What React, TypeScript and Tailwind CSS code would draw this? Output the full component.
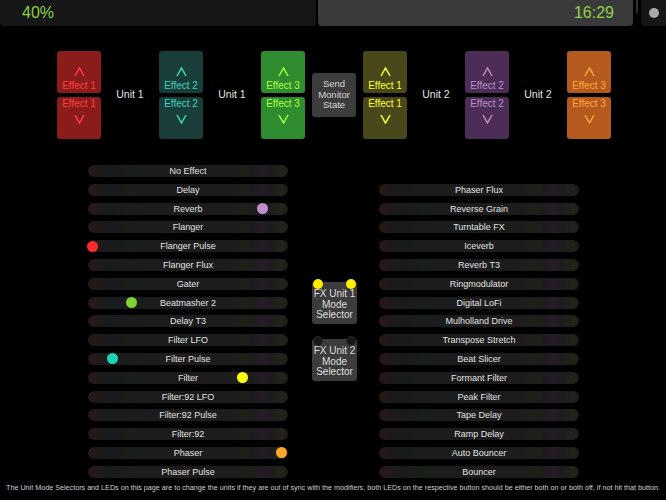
const leftItems: { name: string; led?: string }[] = [
  { name: "No Effect" },
  { name: "Delay" },
  { name: "Reverb", led: "left-[169px] bg-[#c08ec8]" },
  { name: "Flanger" },
  { name: "Flanger Pulse", led: "left-[-1px] bg-[#ff2a2a]" },
  { name: "Flanger Flux" },
  { name: "Gater" },
  { name: "Beatmasher 2", led: "left-[38px] bg-[#7fd335]" },
  { name: "Delay T3" },
  { name: "Filter LFO" },
  { name: "Filter Pulse", led: "left-[19px] bg-[#1fd3b4]" },
  { name: "Filter", led: "left-[149px] bg-[#ffff10]" },
  { name: "Filter:92 LFO" },
  { name: "Filter:92 Pulse" },
  { name: "Filter:92" },
  { name: "Phaser", led: "left-[188px] bg-[#ffa82a]" },
  { name: "Phaser Pulse" },
];

const rightItems = [
  "Phaser Flux",
  "Reverse Grain",
  "Turntable FX",
  "Iceverb",
  "Reverb T3",
  "Ringmodulator",
  "Digital LoFi",
  "Mulholland Drive",
  "Transpose Stretch",
  "Beat Slicer",
  "Formant Filter",
  "Peak Filter",
  "Tape Delay",
  "Ramp Delay",
  "Auto Bouncer",
  "Bouncer",
];

const effects = [
  { label: "Effect 1", bg: "bg-[#8a1c1c]", fg: "text-[#ff3c3c]" },
  { label: "Effect 2", bg: "bg-[#193d39]", fg: "text-[#3fd4bf]" },
  { label: "Effect 3", bg: "bg-[#2f8c2f]", fg: "text-[#a6ff42]" },
  { label: "Effect 1", bg: "bg-[#48481a]", fg: "text-[#ffff33]" },
  { label: "Effect 2", bg: "bg-[#4b2d55]", fg: "text-[#b890cc]" },
  { label: "Effect 3", bg: "bg-[#b45a1e]", fg: "text-[#ffa83c]" },
];

const gaps = ["Unit 1", "Unit 1", "send", "Unit 2", "Unit 2"];

function Chevron({ up }: { up?: boolean }) {
  return (
    <svg width="11" height="10" viewBox="0 0 11 10" className="block">
      <polyline
        points={up ? "1,9 5.5,1 10,9" : "1,1 5.5,9 10,1"}
        fill="none"
        stroke="currentColor"
        strokeWidth="1.5"
      />
    </svg>
  );
}

function EffectColumn({ label, bg, fg }: { label: string; bg: string; fg: string }) {
  return (
    <div className={`flex w-[44px] flex-col gap-[4px] ${fg}`}>
      <div className={`flex h-[42px] flex-col items-center justify-end rounded-[3px] pb-[1px] ${bg}`}>
        <Chevron up />
        <span className="mt-[3px] text-[10px] leading-[12px]">{label}</span>
      </div>
      <div className={`flex h-[42px] flex-col items-center rounded-[3px] pt-[1px] ${bg}`}>
        <span className="text-[10px] leading-[12px]">{label}</span>
        <span className="mt-[4px]">
          <Chevron />
        </span>
      </div>
    </div>
  );
}

const rowBg =
  "bg-[linear-gradient(90deg,#2a1717_0%,#1d1a1a_7%,#181c1e_12%,#1b1b1b_17%,#1a1f1a_22%,#1c1c1c_28%,#1c1c1c_72%,#1f1f18_78%,#1c1c1c_82%,#261a28_87%,#1c1c1c_92%,#23231a_97%,#1c1c1c_100%)]";

function Row({ name, led }: { name: string; led?: string }) {
  return (
    <div className={`relative flex h-[12px] w-[200px] items-center justify-center rounded-full ${rowBg}`}>
      <span className="text-[9px] leading-[12px] text-[#e2e2e2]">{name}</span>
      {led && <span className={`absolute top-[0.5px] h-[11px] w-[11px] rounded-full ${led}`} />}
    </div>
  );
}

function ModeSelector({ n, on }: { n: number; on: boolean }) {
  const ledCls = on
    ? "bg-[#ffee00]"
    : "bg-[#161616] border border-[#2a2a2a]";
  return (
    <div className="relative flex h-[42px] w-[45px] flex-col items-center justify-center rounded-[3px] bg-[#3c3c3c] pt-[4px] text-center text-[10px] leading-[10.5px] text-[#dedede]">
      <span className={`absolute left-[1px] top-[-3px] h-[10px] w-[10px] rounded-full ${ledCls}`} />
      <span className={`absolute right-[1px] top-[-3px] h-[10px] w-[10px] rounded-full ${ledCls}`} />
      <span>FX Unit {n}</span>
      <span>Mode</span>
      <span>Selector</span>
    </div>
  );
}

export default function App() {
  return (
    <main
      className="h-[500px] w-[666px] overflow-hidden bg-black"
      style={{ fontFamily: '"Liberation Sans", Arial, sans-serif' }}
    >
      {/* Status bar */}
      <header className="flex h-[26px]">
        <div className="flex w-[316px] items-center rounded-b-[4px] bg-[#161616] pl-[22px] text-[16px] text-[#8ed14b]">
          40%
        </div>
        <div className="ml-[2px] flex w-[315px] items-center justify-end rounded-b-[4px] bg-[#3a3a3a] pr-[19px] text-[16px] text-[#8ed14b]">
          16:29
        </div>
        <div className="ml-[3px] h-[13px] w-[2px] bg-[#333]" />
        <div className="ml-[3px] flex flex-1 items-center justify-center rounded-bl-[4px] bg-[#161616]">
          <span className="h-[10px] w-[10px] rounded-full bg-[#a9a9a9]" />
        </div>
      </header>

      {/* Effect selectors */}
      <section className="mt-[25px] flex pl-[57px]">
        {effects.map((e, i) => (
          <div key={i} className="flex">
            <EffectColumn {...e} />
            {i < gaps.length && (
              <div className="flex w-[58px] items-center justify-center">
                {gaps[i] === "send" ? (
                  <div className="flex h-[44px] w-[44px] flex-col items-center justify-center rounded-[3px] bg-[#3c3c3c] text-center text-[9.5px] leading-[10.5px] text-[#d8d8d8]">
                    <span>Send</span>
                    <span>Monitor</span>
                    <span>State</span>
                  </div>
                ) : (
                  <span className="text-[10.5px] text-[#e4e4e4]">{gaps[i]}</span>
                )}
              </div>
            )}
          </div>
        ))}
      </section>

      {/* Effect lists */}
      <section className="mt-[26px] flex pl-[88px]">
        <div className="flex flex-col gap-[6.81px]">
          {leftItems.map((it) => (
            <Row key={it.name} {...it} />
          ))}
        </div>
        <div className="ml-[24px] flex w-[45px] flex-col gap-[15px] pt-[117px]">
          <ModeSelector n={1} on />
          <ModeSelector n={2} on={false} />
        </div>
        <div className="ml-[22px] flex flex-col gap-[6.81px] pt-[18.81px]">
          {rightItems.map((n) => (
            <Row key={n} name={n} />
          ))}
        </div>
      </section>

      <p className="mt-[5px] whitespace-nowrap text-center text-[7.2px] text-[#cfcfcf]">
        The Unit Mode Selectors and LEDs on this page are to change the units if they are out of sync with the modifiers, both LEDs on the respective button should be either both on or both off, if not hit that button.
      </p>
    </main>
  );
}
